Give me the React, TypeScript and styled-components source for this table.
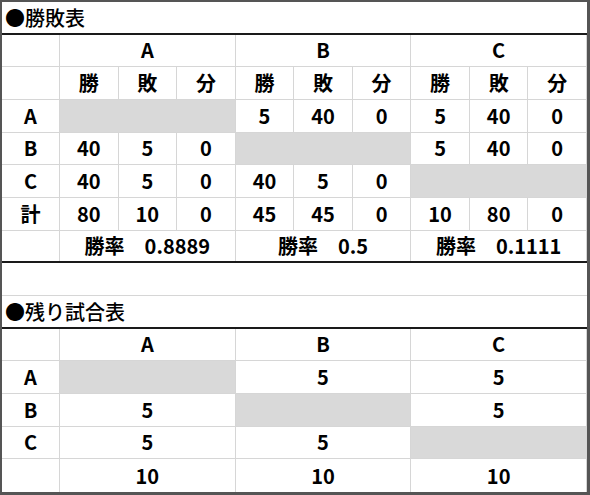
import styled, { createGlobalStyle } from 'styled-components';

const GlobalStyle = createGlobalStyle`
    html, body {
        margin: 0;
        padding: 0;
        background: #ffffff;
    }
    body {
        font-family: "Noto Sans CJK JP", "Noto Sans", sans-serif;
        color: #000000;
    }
`;

const teams = ['A', 'B', 'C'];

// 勝・敗・分 for each row team against each column team (null = self)
const results: (number[] | null)[][] = [
    [null, [5, 40, 0], [5, 40, 0]],
    [[40, 5, 0], null, [5, 40, 0]],
    [[40, 5, 0], [40, 5, 0], null],
];

const totals = [
    [80, 10, 0],
    [45, 45, 0],
    [10, 80, 0],
];

const rates = ['0.8889', '0.5', '0.1111'];

const remaining: (number | null)[][] = [
    [null, 5, 5],
    [5, null, 5],
    [5, 5, null],
];

const remainingTotals = [10, 10, 10];

const App = () => {
    return (
        <>
            <GlobalStyle />
            <Sheet>
                <TitleRow>●勝敗表</TitleRow>

                <Row>
                    <Cell />
                    {teams.map((t) => (
                        <Cell key={t} $span={3}>{t}</Cell>
                    ))}
                </Row>
                <Row>
                    <Cell />
                    {teams.map((t) =>
                        ['勝', '敗', '分'].map((h) => <Cell key={t + h}>{h}</Cell>)
                    )}
                </Row>
                {teams.map((t, i) => (
                    <Row key={t}>
                        <Cell>{t}</Cell>
                        {results[i].map((r, j) =>
                            r ? (
                                r.map((v, k) => <Cell key={`${j}-${k}`}>{v}</Cell>)
                            ) : (
                                <Cell key={j} $span={3} $shaded />
                            )
                        )}
                    </Row>
                ))}
                <Row>
                    <Cell>計</Cell>
                    {totals.map((r, j) => r.map((v, k) => <Cell key={`${j}-${k}`}>{v}</Cell>))}
                </Row>
                <Row $thick>
                    <Cell />
                    {rates.map((r) => (
                        <Cell key={r} $span={3}>
                            勝率　{r}
                        </Cell>
                    ))}
                </Row>

                <BlankRow />

                <TitleRow>●残り試合表</TitleRow>

                <Row>
                    <Cell />
                    {teams.map((t) => (
                        <Cell key={t} $span={3}>{t}</Cell>
                    ))}
                </Row>
                {teams.map((t, i) => (
                    <Row key={t}>
                        <Cell>{t}</Cell>
                        {remaining[i].map((v, j) =>
                            v === null ? (
                                <Cell key={j} $span={3} $shaded />
                            ) : (
                                <Cell key={j} $span={3}>{v}</Cell>
                            )
                        )}
                    </Row>
                ))}
                <Row $last>
                    <Cell />
                    {remainingTotals.map((v, j) => (
                        <Cell key={j} $span={3}>{v}</Cell>
                    ))}
                </Row>
            </Sheet>
        </>
    );
};

const Sheet = styled.div`
    width: 590px;
    height: 495px;
    box-sizing: border-box;
    border-style: solid;
    border-color: #555555;
    border-width: 2px 3px 3px 2px;
    background: #ffffff;
    display: grid;
    grid-template-rows: repeat(15, 1fr);
    overflow: hidden;
`;

const TitleRow = styled.div`
    display: flex;
    align-items: center;
    padding-left: 3px;
    border-bottom: 2px solid #1a1a1a;
    font-size: 20px;
    font-weight: 500;
`;

const BlankRow = styled.div`
    border-bottom: 1px solid #d6d6d6;
`;

const Row = styled.div<{ $thick?: boolean; $last?: boolean }>`
    display: grid;
    grid-template-columns: 58px repeat(9, 1fr);
    box-sizing: border-box;
    border-bottom: ${(p) =>
        p.$thick ? '2px solid #1a1a1a' : p.$last ? 'none' : '1px solid #d6d6d6'};
    min-height: 0;
`;

const Cell = styled.div<{ $span?: number; $shaded?: boolean }>`
    grid-column: span ${(p) => p.$span ?? 1};
    display: flex;
    align-items: center;
    justify-content: center;
    box-sizing: border-box;
    border-right: 1px solid #d6d6d6;
    background: ${(p) => (p.$shaded ? '#d9d9d9' : 'transparent')};
    font-size: 20px;
    font-weight: 600;
    white-space: pre;
    line-height: 1;
`;

export default App;
